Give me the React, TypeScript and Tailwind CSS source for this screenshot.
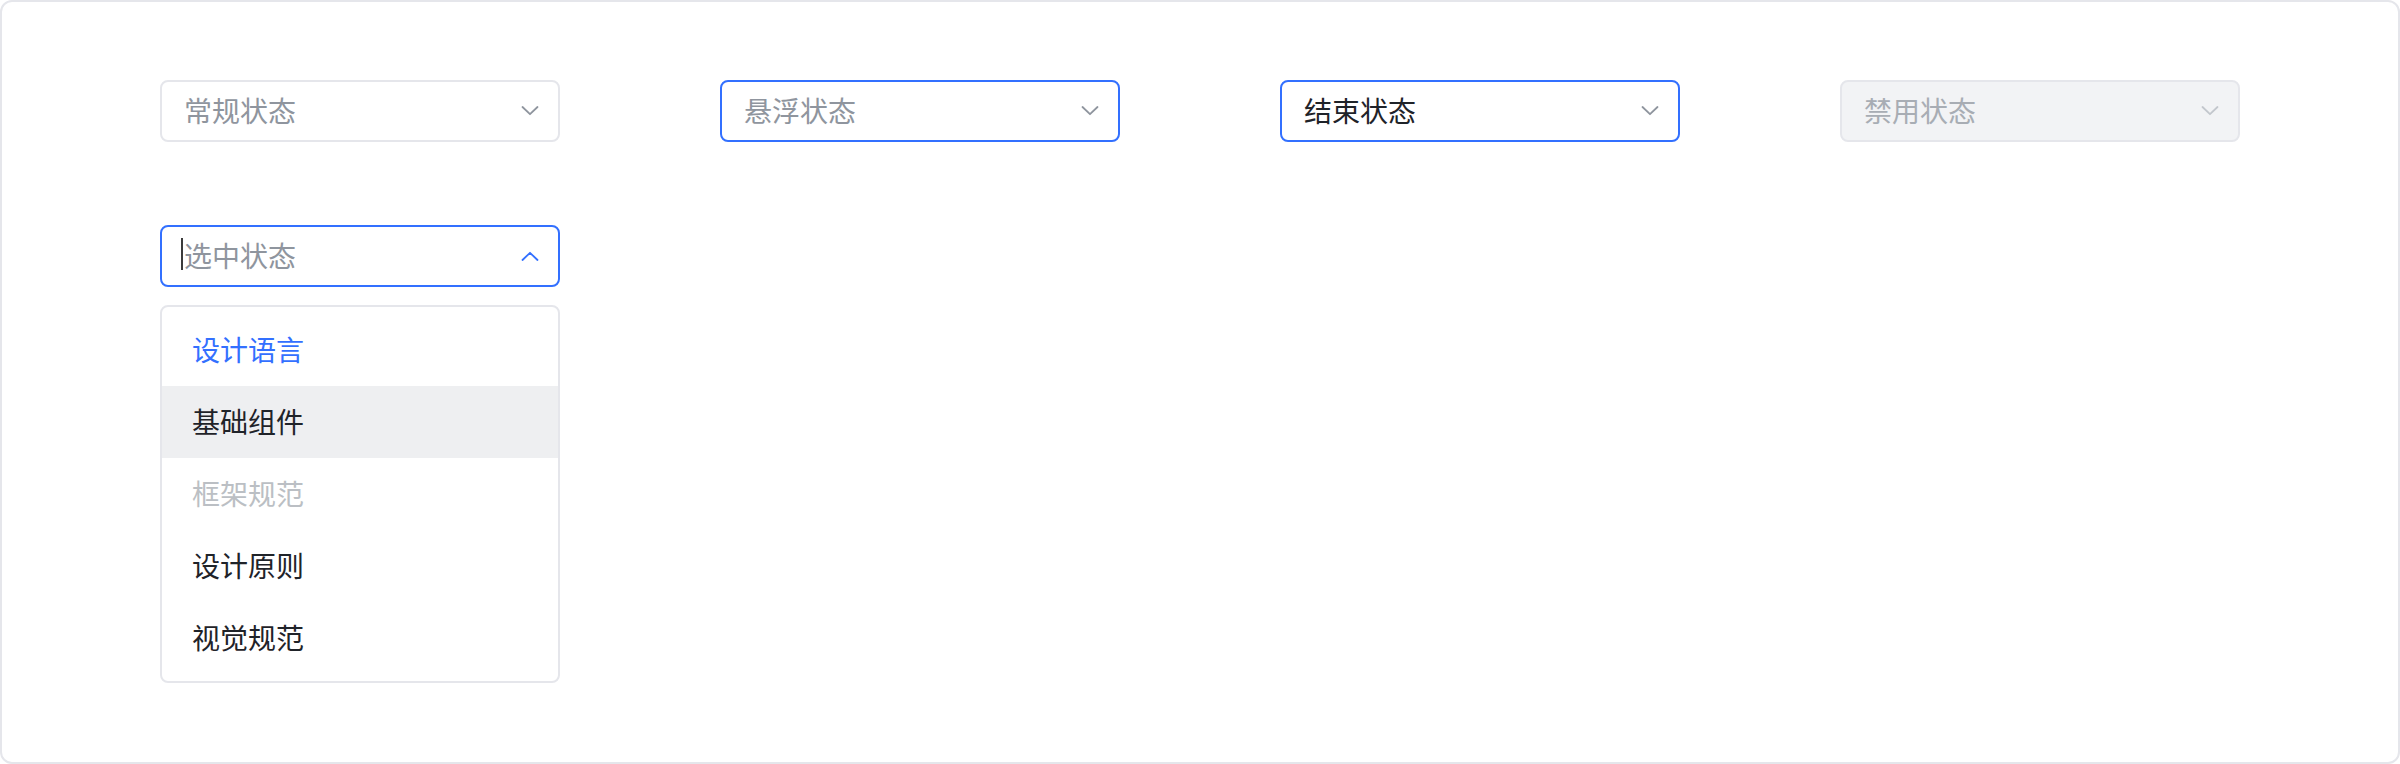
const font = { fontFamily: '"Noto Sans CJK SC", "Noto Sans", sans-serif' };

function Chevron({ up = false, color }: { up?: boolean; color: string }) {
  return (
    <svg width="18" height="10" viewBox="0 0 18 10" fill="none" className="shrink-0">
      <path
        d={up ? "M1.5 9L9 1.8L16.5 9" : "M1.5 1L9 8.2L16.5 1"}
        stroke={color}
        strokeWidth="1.8"
        strokeLinecap="round"
        strokeLinejoin="round"
      />
    </svg>
  );
}

type SelectProps = {
  label: string;
  variant: "normal" | "hover" | "filled" | "disabled" | "focus";
};

function Select({ label, variant }: SelectProps) {
  const boxCls = {
    normal: "border-[#e5e6eb] bg-white",
    hover: "border-[#3370ff] bg-white",
    filled: "border-[#3370ff] bg-white",
    disabled: "border-[#e5e6eb] bg-[#f2f3f5]",
    focus: "border-[#3370ff] bg-white",
  }[variant];
  const textCls = {
    normal: "text-[#8f959e]",
    hover: "text-[#8f959e]",
    filled: "text-[#1f2329]",
    disabled: "text-[#a8adb4]",
    focus: "text-[#8f959e]",
  }[variant];
  const chevronColor =
    variant === "focus" ? "#3370ff" : variant === "disabled" ? "#c3c7cd" : "#8f959e";

  return (
    <div
      className={`flex h-[62px] w-[400px] items-center justify-between rounded-[8px] border-2 pl-[22px] pr-[19px] ${boxCls}`}
    >
      <span className={`relative pb-[3px] text-[28px] leading-none ${textCls}`}>
        {variant === "focus" && (
          <span className="absolute -left-[3px] -top-[3px] h-[32px] w-[2px] bg-[#3b3b3b]" />
        )}
        {label}
      </span>
      <Chevron up={variant === "focus"} color={chevronColor} />
    </div>
  );
}

const options = [
  { label: "设计语言", state: "active" },
  { label: "基础组件", state: "hover" },
  { label: "框架规范", state: "disabled" },
  { label: "设计原则", state: "normal" },
  { label: "视觉规范", state: "normal" },
];

export default function App() {
  return (
    <div style={font} className="h-[764px] w-[2400px] bg-white">
      <div className="h-full rounded-[12px] border-2 border-[#e5e6eb] pl-[158px] pt-[78px]">
        {/* Top row: states */}
        <div className="flex gap-[160px]">
          <Select label="常规状态" variant="normal" />
          <Select label="悬浮状态" variant="hover" />
          <Select label="结束状态" variant="filled" />
          <Select label="禁用状态" variant="disabled" />
        </div>

        {/* Open select with menu */}
        <div className="mt-[83px] w-[400px]">
          <Select label="选中状态" variant="focus" />
          <div className="mt-[18px] rounded-[8px] border-2 border-[#e5e6eb] bg-white py-[7px]">
            {options.map((o) => (
              <div
                key={o.label}
                className={`flex h-[72px] items-center pb-[3px] pl-[30px] text-[28px] leading-none ${
                  o.state === "active"
                    ? "text-[#3370ff]"
                    : o.state === "hover"
                      ? "bg-[#eeeff1] text-[#1f2329]"
                      : o.state === "disabled"
                        ? "text-[#bbbfc4]"
                        : "text-[#1f2329]"
                }`}
              >
                {o.label}
              </div>
            ))}
          </div>
        </div>
      </div>
    </div>
  );
}
